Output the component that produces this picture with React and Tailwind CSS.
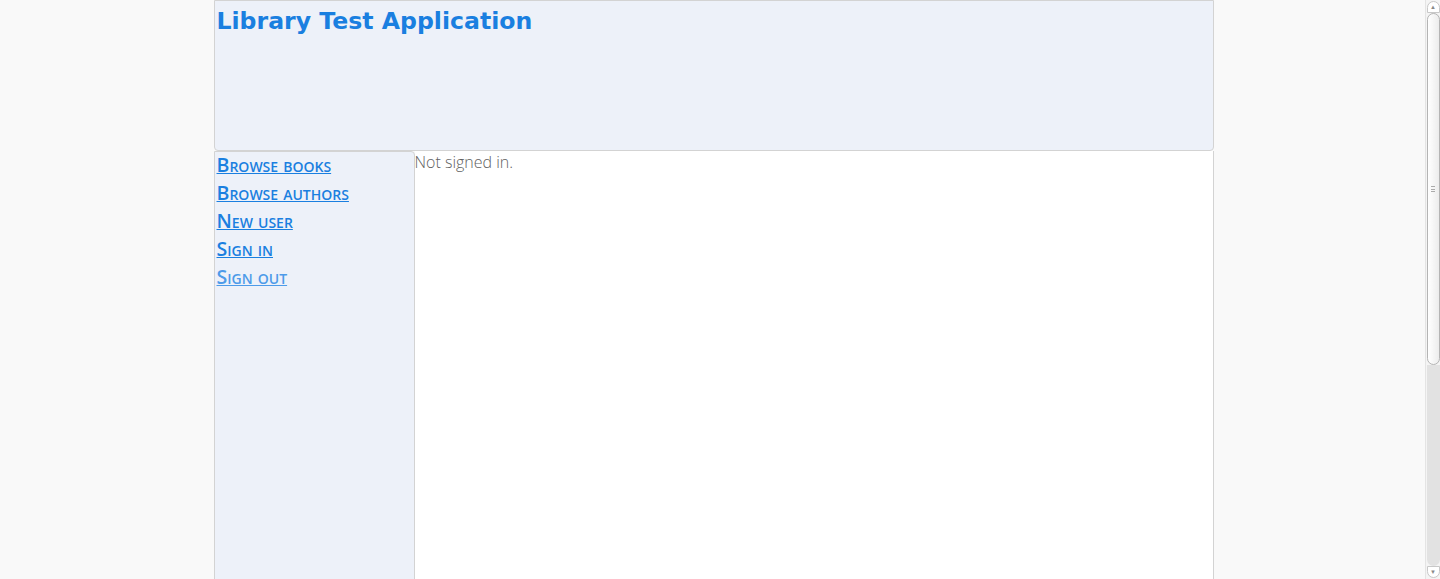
export default function App() {
    const links = [
        { label: 'Browse books', visited: false },
        { label: 'Browse authors', visited: false },
        { label: 'New user', visited: false },
        { label: 'Sign in', visited: false },
        { label: 'Sign out', visited: true },
    ]

    return (
        <div className="flex min-h-[760px] bg-[#f9f9f9]">
            <div className="flex-1">
                <div className="mx-auto w-[1000px] translate-x-[1px]">
                    <header className="h-[151px] rounded-b-[4px] border border-[#d3d3d3] bg-[#edf1f9] px-[2px]">
                        <h1 className="font-['DejaVu_Sans',sans-serif] text-[23.6px] font-bold leading-[40px] text-[#1a7fe0]">
                            Library Test Application
                        </h1>
                    </header>
                    <div className="flex h-[610px]">
                        <nav className="w-[201px] shrink-0 rounded-tr-[4px] border border-[#d3d3d3] bg-[#edf1f9] font-['Open_Sans',sans-serif]">
                            <div className="-mt-[1px]">
                                {links.map(({ label, visited }) => (
                                    <a
                                        key={label}
                                        href="#"
                                        className={`block pl-[2px] text-[19.6px] font-semibold leading-[28px] underline [font-variant:small-caps] ${visited ? 'text-[#4d9be9]' : 'text-[#1a7fe0]'}`}
                                    >
                                        {label}
                                    </a>
                                ))}
                            </div>
                        </nav>
                        <main className="flex-1 border-r border-[#d3d3d3] bg-white font-['Open_Sans',sans-serif] text-[16px] font-light leading-[22px] text-[#5f5f5f]">
                            Not signed in.
                        </main>
                    </div>
                </div>
            </div>
            <div className="w-[15px] shrink-0" />
            {/* fake browser scrollbar */}
            <div className="fixed right-0 top-0 flex h-[579px] w-[15px] flex-col items-center border-l border-[#e4e4e4] bg-[#f4f4f4] py-[1px]">
                <div className="flex h-[12px] w-[13px] items-center justify-center rounded-t-full border border-[#c8c8c8] bg-white text-[6px] leading-none text-[#888]">
                    ▲
                </div>
                <div className="flex h-[352px] w-[13px] items-center justify-center rounded-full border border-[#b4b4b4] bg-gradient-to-r from-white to-[#ececec]">
                    <span className="block h-[6px] w-[4px] border-y border-[#aaa] bg-[linear-gradient(#aaa,#aaa)] bg-[length:100%_1px] bg-center bg-no-repeat" />
                </div>
                <div className="flex-1 w-[13px] rounded-b-full bg-[#e2e2e2]" />
                <div className="flex h-[12px] w-[13px] items-center justify-center rounded-b-full border border-[#c8c8c8] bg-white text-[6px] leading-none text-[#888]">
                    ▼
                </div>
            </div>
        </div>
    )
}
